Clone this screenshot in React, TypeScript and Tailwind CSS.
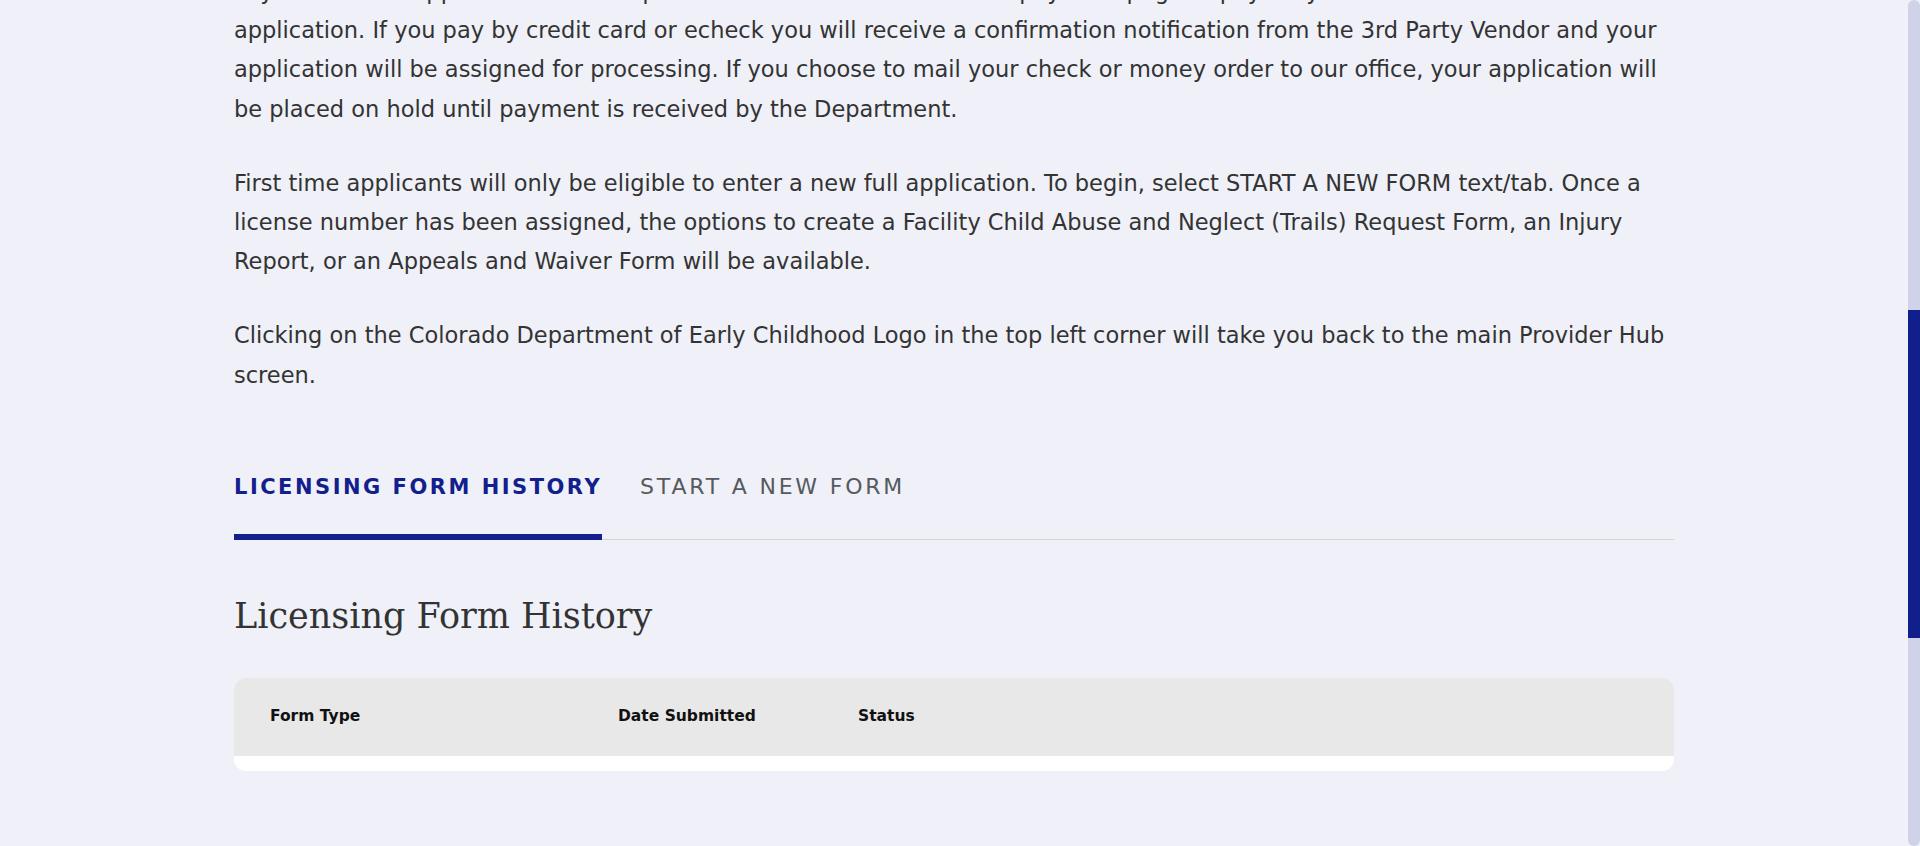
const body = "font-['DejaVu_Sans',sans-serif]";

function Paragraph({ children }: { children: React.ReactNode }) {
  return <p className="mb-[35px] text-[22.5px] leading-[39.2px] text-[#333]">{children}</p>;
}

function Tabs() {
  return (
    <div className="mt-[77px] flex gap-[38px] border-b border-[#d4d4d8]">
      <button className="-mb-px border-b-[6px] border-[#121f8c] pb-[32px] text-[21px] font-bold uppercase leading-[30px] tracking-[2.5px] text-[#121f8c]">
        Licensing Form History
      </button>
      <button className="-mb-px border-b-[6px] border-transparent pb-[32px] text-[22px] uppercase leading-[30px] tracking-[2.8px] text-[#555a5e]">
        Start a New Form
      </button>
    </div>
  );
}

function HistoryTable() {
  return (
    <div className="mt-[40px] overflow-hidden rounded-[12px] bg-white">
      <div className="flex h-[78px] items-center bg-[#e8e8e8] pl-[36px] text-[15.5px] font-bold text-[#111]">
        <div className="w-[348px]">Form Type</div>
        <div className="w-[240px]">Date Submitted</div>
        <div>Status</div>
      </div>
      <div className="h-[15px]" />
    </div>
  );
}

export default function App() {
  return (
    <div className={`flex h-[846px] overflow-hidden bg-[#eff0f8] ${body}`}>
      <main className="flex-1">
        <div className="mx-auto -mt-[28px] w-[1440px]">
          <Paragraph>
            <span className="block overflow-hidden whitespace-nowrap">
              Payment of the application fee is required. You will be directed to the payment page to pay for your
            </span>
            application. If you pay by credit card or echeck you will receive a confirmation notification from the 3rd
            Party Vendor and your application will be assigned for processing. If you choose to mail your check or
            money order to our office, your application will be placed on hold until payment is received by the
            Department.
          </Paragraph>
          <Paragraph>
            First time applicants will only be eligible to enter a new full application. To begin, select START A NEW
            FORM text/tab. Once a license number has been assigned, the options to create a Facility Child Abuse and
            Neglect (Trails) Request Form, an Injury Report, or an Appeals and Waiver Form will be available.
          </Paragraph>
          <p className="text-[22.5px] leading-[39.2px] text-[#333]">
            Clicking on the Colorado Department of Early Childhood Logo in the top left corner will take you back to
            the main Provider Hub screen.
          </p>

          <Tabs />

          <h2 className="mt-[54px] font-['DejaVu_Serif',serif] text-[35px] leading-[44px] text-[#333]">
            Licensing Form History
          </h2>

          <HistoryTable />
        </div>
      </main>

      <aside className="flex w-[12px] flex-col overflow-hidden rounded-full bg-[#cfd2e8]">
        <div className="h-[310px]" />
        <div className="h-[328px] bg-[#111f8c]" />
      </aside>
    </div>
  );
}
